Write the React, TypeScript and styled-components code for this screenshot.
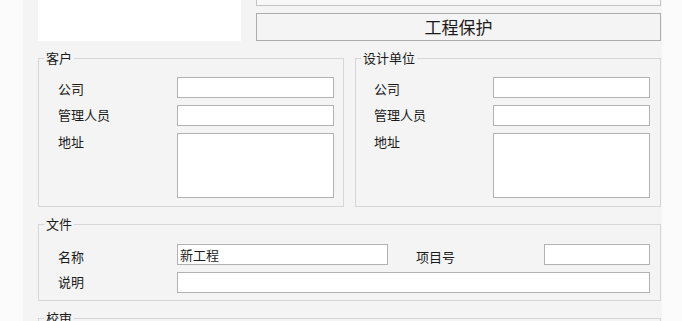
import React from "react";
import styled, { createGlobalStyle } from "styled-components";

const Global = createGlobalStyle`
  html, body { margin: 0; padding: 0; }
  body {
    background: #fbfbfb;
    font-family: "Noto Sans CJK SC", "Noto Sans", sans-serif;
    color: #1b1b1b;
    overflow: hidden;
  }
`;

const Page = styled.div`
  padding-left: 23px;
  height: 321px;
  overflow: hidden;
`;

const Panel = styled.div`
  width: 639px;
  box-sizing: border-box;
  padding: 0 1px 0 15px;
  background: #f4f4f4;
  min-height: 400px;
  margin-top: -22px;
  display: block;
`;

const TopRow = styled.div`
  display: flex;
  gap: 15px;
`;

const Preview = styled.div`
  width: 203px;
  height: 63px;
  background: #ffffff;
`;

const ButtonCol = styled.div`
  flex: 1;
  display: flex;
  flex-direction: column;
  gap: 7px;
`;

const PlainBox = styled.div`
  height: 28px;
  box-sizing: border-box;
  border: 1px solid #c4c4c4;
  background: #f7f7f7;
`;

const Button = styled.button`
  display: block;
  width: 100%;
  height: 28px;
  box-sizing: border-box;
  border: 1px solid #acacac;
  background: #f4f4f4;
  font-family: inherit;
  font-size: 17px;
  color: #1b1b1b;
  padding: 0;
  line-height: 26px;
`;

const GroupRow = styled.div`
  display: flex;
  gap: 11px;
  margin-top: 10px;
`;

const Group = styled.fieldset<{ $top?: number }>`
  display: block;
  flex: 1;
  min-width: 0;
  margin: ${(p) => p.$top ?? 0}px 0 0 0;
  padding: 0;
  border: 1px solid #d6d6d6;
  box-sizing: border-box;
`;

const Legend = styled.legend`
  margin-left: 5px;
  padding: 0 2px;
  font-size: 13px;
  line-height: 14px;
  height: 14px;
`;

const FormGrid = styled.div<{ $padLeft: number; $padRight: number }>`
  display: grid;
  grid-template-columns: 119px 1fr;
  grid-template-rows: 21px 21px 65px;
  row-gap: 7px;
  padding: 12px ${(p) => p.$padRight}px 8px ${(p) => p.$padLeft}px;
`;

const Label = styled.div<{ $w?: number; $dy?: number }>`
  font-size: 13px;
  line-height: 21px;
  height: 21px;
  padding-top: ${(p) => Math.max(p.$dy ?? 0, 0)}px;
  margin-top: ${(p) => Math.min(p.$dy ?? 0, 0)}px;
  white-space: nowrap;
  ${(p) => (p.$w ? `width: ${p.$w}px; flex: none;` : "")}
`;

const Input = styled.input<{ $w?: number }>`
  box-sizing: border-box;
  height: 21px;
  border: 1px solid #b2b2b2;
  background: #ffffff;
  margin: 0;
  padding: 0 2px;
  font-family: inherit;
  font-size: 13px;
  color: #1b1b1b;
  outline: none;
  min-width: 0;
  ${(p) => (p.$w ? `width: ${p.$w}px; flex: none;` : "flex: 1;")}
`;

const Area = styled.textarea`
  box-sizing: border-box;
  height: 65px;
  border: 1px solid #b2b2b2;
  background: #ffffff;
  margin: 0;
  padding: 0;
  resize: none;
  outline: none;
`;

const FileBody = styled.div`
  display: flex;
  flex-direction: column;
  gap: 7px;
  padding: 13px 10px 7px 19px;
`;

const Line = styled.div`
  display: flex;
  height: 21px;
`;

const Spacer = styled.div<{ $w: number }>`
  width: ${(p) => p.$w}px;
  flex: none;
`;

function PartyGroup({ title, padLeft, padRight }: { title: string; padLeft: number; padRight: number }) {
  return (
    <Group>
      <Legend>{title}</Legend>
      <FormGrid $padLeft={padLeft} $padRight={padRight}>
        <Label $dy={1}>公司</Label>
        <Input />
        <Label $dy={-1}>管理人员</Label>
        <Input />
        <Label $dy={-2}>地址</Label>
        <Area />
      </FormGrid>
    </Group>
  );
}

export default function App() {
  return (
    <>
      <Global />
      <Page>
        <Panel>
          <TopRow>
            <Preview />
            <ButtonCol>
              <PlainBox />
              <Button>工程保护</Button>
            </ButtonCol>
          </TopRow>
          <GroupRow>
            <PartyGroup title="客户" padLeft={19} padRight={9} />
            <PartyGroup title="设计单位" padLeft={18} padRight={10} />
          </GroupRow>
          <Group $top={10}>
            <Legend>文件</Legend>
            <FileBody>
              <Line>
                <Label $w={119} $dy={2}>名称</Label>
                <Input $w={211} defaultValue="新工程" />
                <Spacer $w={28} />
                <Label $w={128} $dy={2}>项目号</Label>
                <Input $w={106} />
              </Line>
              <Line>
                <Label $w={119} $dy={-1}>说明</Label>
                <Input />
              </Line>
            </FileBody>
          </Group>
          <Group $top={10}>
            <Legend>校审</Legend>
            <FileBody>
              <Line />
            </FileBody>
          </Group>
        </Panel>
      </Page>
    </>
  );
}
